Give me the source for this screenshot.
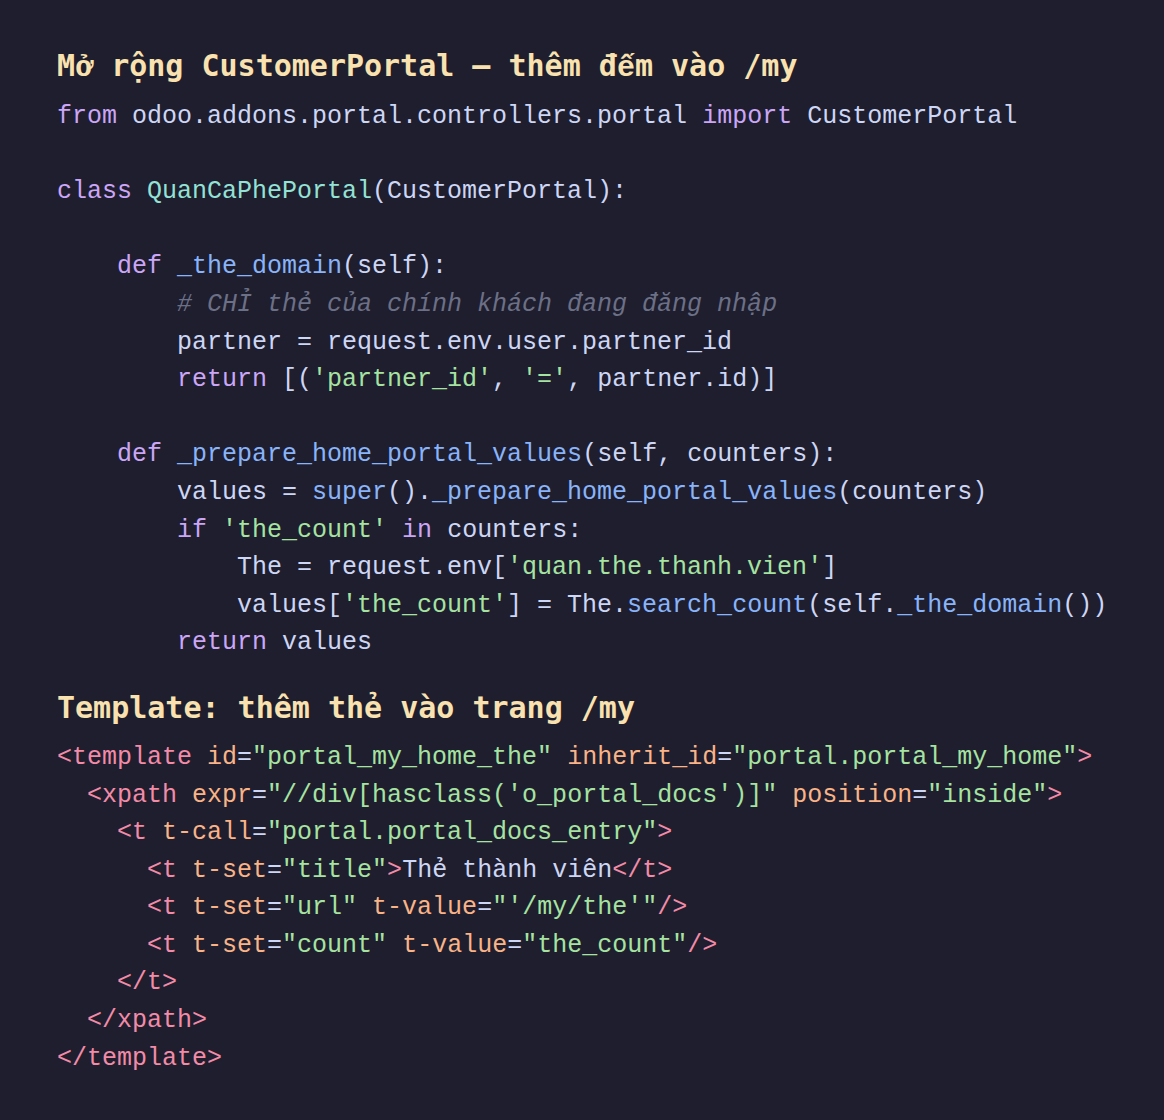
import React from 'react';

// catppuccin-ish token colours
const K = 'text-[#cba6f7]'; // keyword
const F = 'text-[#89b4fa]'; // function
const S = 'text-[#a6e3a1]'; // string
const C = 'text-[#94e2d5]'; // class
const G = 'text-[#f38ba8]'; // tag
const A = 'text-[#fab387]'; // attr
const M = 'text-[#6c7086] italic'; // comment

type Tok = [string, string?];

const python: Tok[][] = [
  [['from', K], [' odoo.addons.portal.controllers.portal '], ['import', K], [' CustomerPortal']],
  [],
  [['class', K], [' '], ['QuanCaPhePortal', C], ['(CustomerPortal):']],
  [],
  [['    '], ['def', K], [' '], ['_the_domain', F], ['(self):']],
  [['        '], ['# CHỈ thẻ của chính khách đang đăng nhập', M]],
  [['        partner = request.env.user.partner_id']],
  [['        '], ['return', K], [' [('], ["'partner_id'", S], [', '], ["'='", S], [', partner.id)]']],
  [],
  [['    '], ['def', K], [' '], ['_prepare_home_portal_values', F], ['(self, counters):']],
  [['        values = '], ['super', F], ['().'], ['_prepare_home_portal_values', F], ['(counters)']],
  [['        '], ['if', K], [' '], ["'the_count'", S], [' '], ['in', K], [' counters:']],
  [['            The = request.env['], ["'quan.the.thanh.vien'", S], [']']],
  [['            values['], ["'the_count'", S], ['] = The.'], ['search_count', F], ['(self.'], ['_the_domain', F], ['())']],
  [['        '], ['return', K], [' values']],
];

const xml: Tok[][] = [
  [['<template', G], [' '], ['id', A], ['='], ['"portal_my_home_the"', S], [' '], ['inherit_id', A], ['='], ['"portal.portal_my_home"', S], ['>', G]],
  [['  '], ['<xpath', G], [' '], ['expr', A], ['='], ['"//div[hasclass(\'o_portal_docs\')]"', S], [' '], ['position', A], ['='], ['"inside"', S], ['>', G]],
  [['    '], ['<t', G], [' '], ['t-call', A], ['='], ['"portal.portal_docs_entry"', S], ['>', G]],
  [['      '], ['<t', G], [' '], ['t-set', A], ['='], ['"title"', S], ['>', G], ['Thẻ thành viên'], ['</t>', G]],
  [['      '], ['<t', G], [' '], ['t-set', A], ['='], ['"url"', S], [' '], ['t-value', A], ['='], ['"\'/my/the\'"', S], ['/>', G]],
  [['      '], ['<t', G], [' '], ['t-set', A], ['='], ['"count"', S], [' '], ['t-value', A], ['='], ['"the_count"', S], ['/>', G]],
  [['    '], ['</t>', G]],
  [['  '], ['</xpath>', G]],
  [['</template>', G]],
];

const Code = ({ lines }: { lines: Tok[][] }) => (
  <pre className="font-['Liberation_Mono',monospace] text-[25px] leading-[37.6px] text-[#cdd6f4] whitespace-pre">
    {lines.map((line, i) => (
      <div key={i} className="h-[37.6px]">
        {line.map(([t, cls], j) => (
          <span key={j} className={cls}>
            {t}
          </span>
        ))}
      </div>
    ))}
  </pre>
);

const heading = "h-[40px] font-['DejaVu_Sans_Mono',monospace] font-bold text-[30px] leading-[40px] text-[#f9e2af] whitespace-pre";
const alt = "font-['Liberation_Mono',monospace] text-[30px] leading-none";

export default function App() {
  return (
    <div className="w-[1164px] h-[1120px] bg-[#1e1e2e] pl-[57px] pt-[46px]">
      <h2 className={heading}>
        M<span className={alt}>{'\u1edf'}</span>
        {' r\u1ed9ng CustomerPortal \u2014 th\u00eam \u0111'}
        <span className={alt}>{'\u1ebf'}</span>
        {'m v\u00e0o /my'}
      </h2>
      <div className="mt-[12px]">
        <Code lines={python} />
      </div>
      <h2 className={`mt-[26px] ${heading}`}>{'Template: th\u00eam th\u1ebb v\u00e0o trang /my'}</h2>
      <div className="mt-[11px]">
        <Code lines={xml} />
      </div>
    </div>
  );
}
